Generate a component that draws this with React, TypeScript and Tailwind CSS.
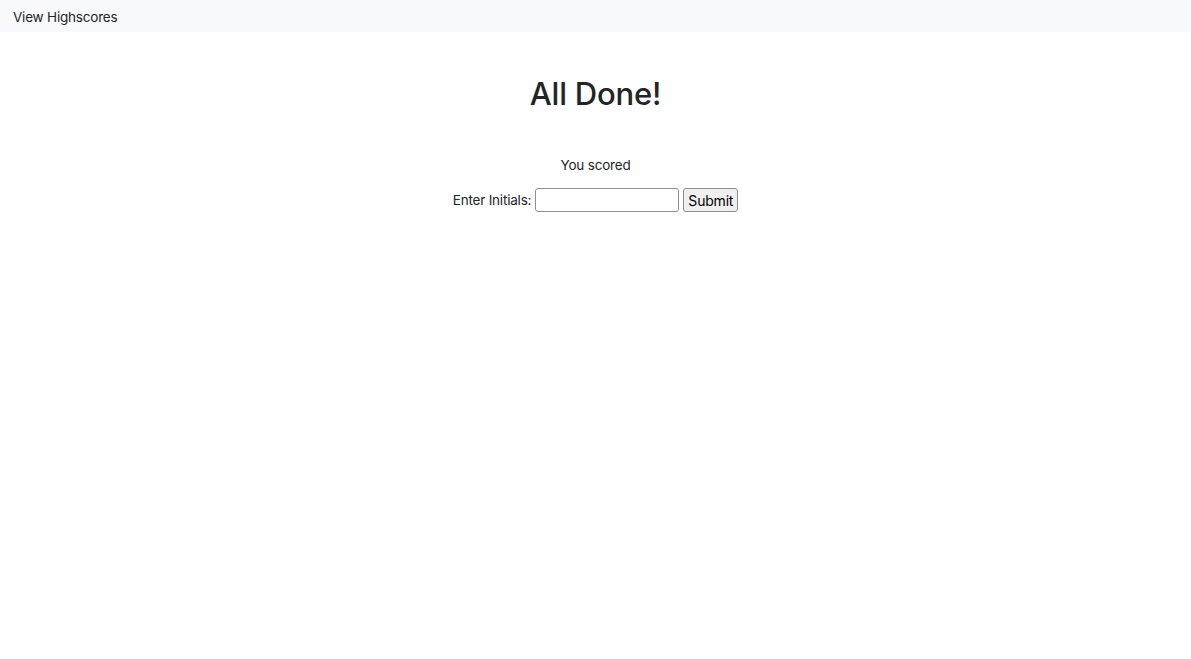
export default function App() {
  return (
    <div className="min-h-[659px] bg-white text-[#212529]" style={{ fontFamily: 'Inter, "Liberation Sans", sans-serif' }}>
      <nav className="h-8 bg-[#f8f9fa] flex items-center px-[13px] pt-[2px]">
        <a className="text-[13.5px] tracking-[-0.2px] text-[#212529]">View Highscores</a>
      </nav>
      <div className="flex flex-col items-center">
        <h1 className="mt-[40px] text-[31px] font-medium leading-[44px] tracking-[-0.2px]">All Done!</h1>
        <p className="mt-[38px] text-[13.5px] tracking-[-0.2px] leading-[22px]">You scored</p>
        <div className="mt-[12px] flex items-center gap-[4px] text-[13.5px] tracking-[-0.2px]">
          <label className="pt-[1px]">Enter Initials:</label>
          <input className="w-[144px] h-[24px] border border-[#8f8f8f] rounded-[3px] bg-white px-1" />
          <button className="h-[24px] w-[55px] border border-[#8f8f8f] rounded-[3px] bg-[#efefef] text-[14px] text-black">Submit</button>
        </div>
      </div>
    </div>
  );
}
